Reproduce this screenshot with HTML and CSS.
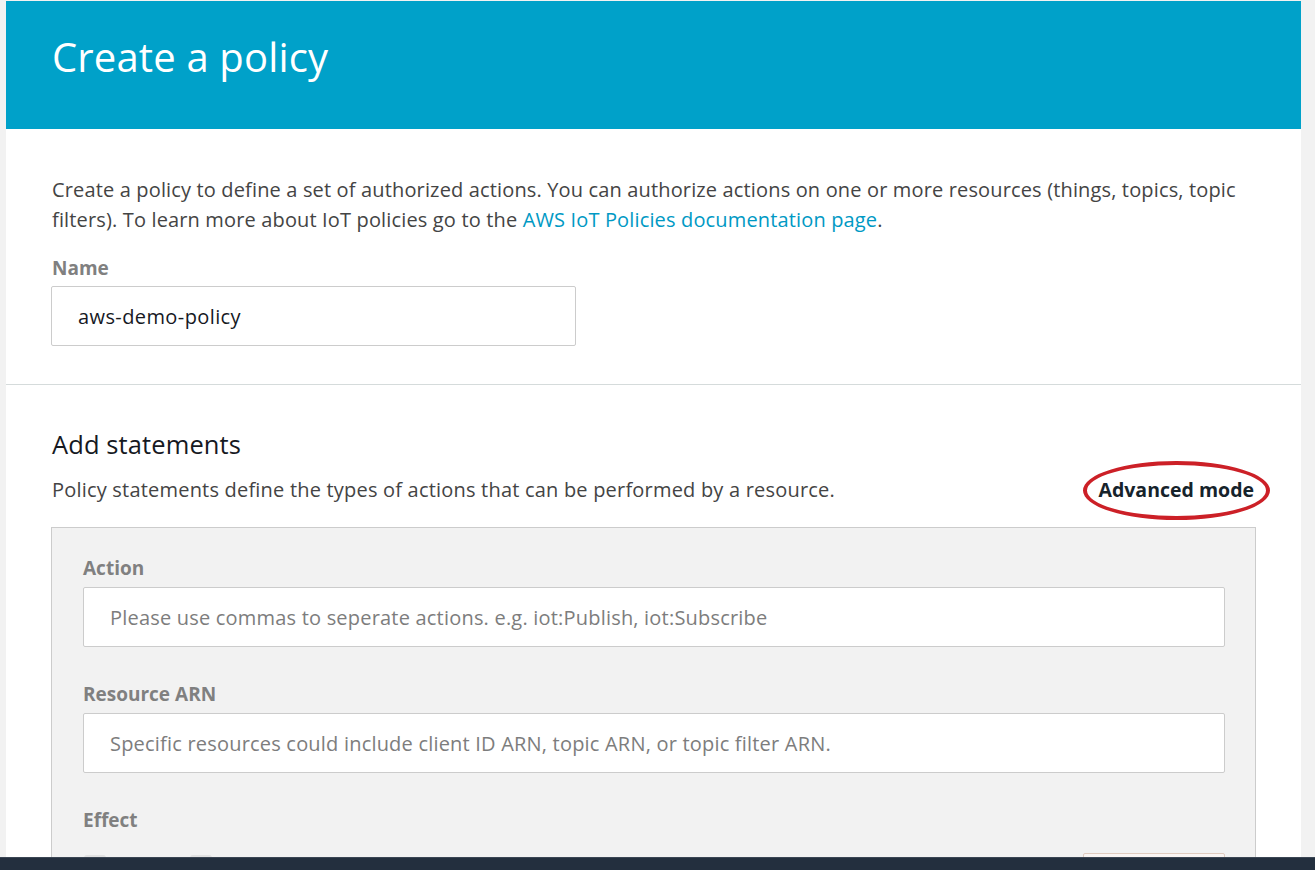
FILE: index.html
```html
<!DOCTYPE html>
<html>
<head>
<meta charset="utf-8">
<link rel="stylesheet" href="styles.css">
</head>
<body>
<div class="page">
  <div class="card">
    <header class="hero">
      <h1 class="title">Create a policy</h1>
    </header>
    <section class="intro">
      <p class="desc">Create a policy to define a set of authorized actions. You can authorize actions on one or more resources (things, topics, topic filters). To learn more about IoT policies go to the <a class="link" href="#">AWS IoT Policies documentation page</a>.</p>
      <label class="label">Name</label>
      <div class="input name-input">aws-demo-policy</div>
    </section>
    <section class="statements">
      <h2 class="heading">Add statements</h2>
      <div class="sub-row">
        <p class="sub">Policy statements define the types of actions that can be performed by a resource.</p>
        <span class="adv">Advanced mode<span class="ring"></span></span>
      </div>
      <div class="box">
        <label class="label">Action</label>
        <div class="input wide placeholder">Please use commas to seperate actions. e.g. iot:Publish, iot:Subscribe</div>
        <label class="label">Resource ARN</label>
        <div class="input wide placeholder">Specific resources could include client ID ARN, topic ARN, or topic filter ARN.</div>
        <label class="label">Effect</label>
        <div class="effect-row">
          <span class="check"></span>
          <span class="check second"></span>
          <span class="remove"></span>
        </div>
      </div>
    </section>
  </div>
</div>
<div class="bottombar"></div>
</body>
</html>
```
FILE: styles.css
```css
html, body {
  margin: 0;
  padding: 0;
  height: 870px;
  overflow: hidden;
  background: #f2f2f2;
  font-family: "Open Sans", "Noto Sans", sans-serif;
}
.page {
  padding: 1px 14px 0 6px;
}
.card {
  background: #fff;
  width: 1295px;
  height: 900px;
}
.hero {
  background: #00a1c9;
  height: 128px;
  padding-left: 46px;
  display: flex;
  align-items: flex-start;
}
.title {
  margin: 29px 0 0 0;
  color: #fff;
  font-weight: 400;
  font-size: 40px;
  line-height: 54px;
  letter-spacing: 0.15px;
}
.intro {
  padding: 46px 45px 38px 45px;
  border-bottom: 1px solid #d5dbdb;
}
.desc {
  margin: 0 0 0 1px;
  font-size: 20px;
  line-height: 30px;
  letter-spacing: 0.15px;
  color: #444;
}
.link {
  color: #0099c4;
  text-decoration: none;
}
.label {
  display: block;
  font-weight: 700;
  font-size: 19px;
  line-height: 24px;
  color: #808080;
}
.intro .label {
  margin: 21px 0 6px 1px;
}
.input {
  box-sizing: border-box;
  height: 60px;
  border: 1px solid #ccc;
  border-radius: 2px;
  background: #fff;
  display: flex;
  align-items: center;
  padding-left: 26px;
  font-size: 20px;
  letter-spacing: 0.2px;
  color: #16191f;
}
.name-input {
  width: 525px;
  letter-spacing: 0.4px;
}
.statements {
  padding: 43px 45px 0 45px;
}
.heading {
  margin: 0 0 0 1px;
  font-weight: 400;
  font-size: 25.5px;
  line-height: 32px;
  letter-spacing: 0.1px;
  color: #16191f;
}
.sub-row {
  display: flex;
  justify-content: space-between;
  align-items: center;
  margin-top: 15px;
}
.sub {
  margin: 0 0 0 1px;
  font-size: 20px;
  line-height: 30px;
  letter-spacing: 0.2px;
  color: #444;
}
.adv {
  position: relative;
  font-weight: 700;
  font-size: 19.5px;
  line-height: 30px;
  color: #16232b;
  margin-right: 2px;
}
.ring {
  position: absolute;
  left: -15px;
  right: -16px;
  top: -14px;
  bottom: -15px;
  border: 4px solid #cc2027;
  border-radius: 50%;
}
.box {
  margin-top: 22px;
  background: #f2f2f2;
  border: 1px solid #ccc;
  border-bottom: none;
  padding: 28px 30px 40px 31px;
  height: 400px;
}
.box .label {
  margin-bottom: 7px;
}
.wide {
  width: 100%;
  margin-bottom: 35px;
}
.placeholder {
  color: #7d7d7d;
}
.effect-row {
  position: relative;
  margin-top: 23px;
  height: 40px;
}
.check {
  position: absolute;
  left: 1px;
  top: 0;
  width: 22px;
  height: 22px;
  border-radius: 3px;
  background: #e2e2e2;
}
.check.second {
  left: 107px;
}
.remove {
  position: absolute;
  right: 0;
  top: -2px;
  width: 142px;
  height: 40px;
  box-sizing: border-box;
  border: 1px solid #e0ccc0;
  border-radius: 2px;
  background: #faf5f3;
}
.bottombar {
  position: fixed;
  left: 0;
  right: 0;
  bottom: 0;
  height: 12px;
  background: #232f3e;
  border-top: 1px solid #3b4654;
}
```
